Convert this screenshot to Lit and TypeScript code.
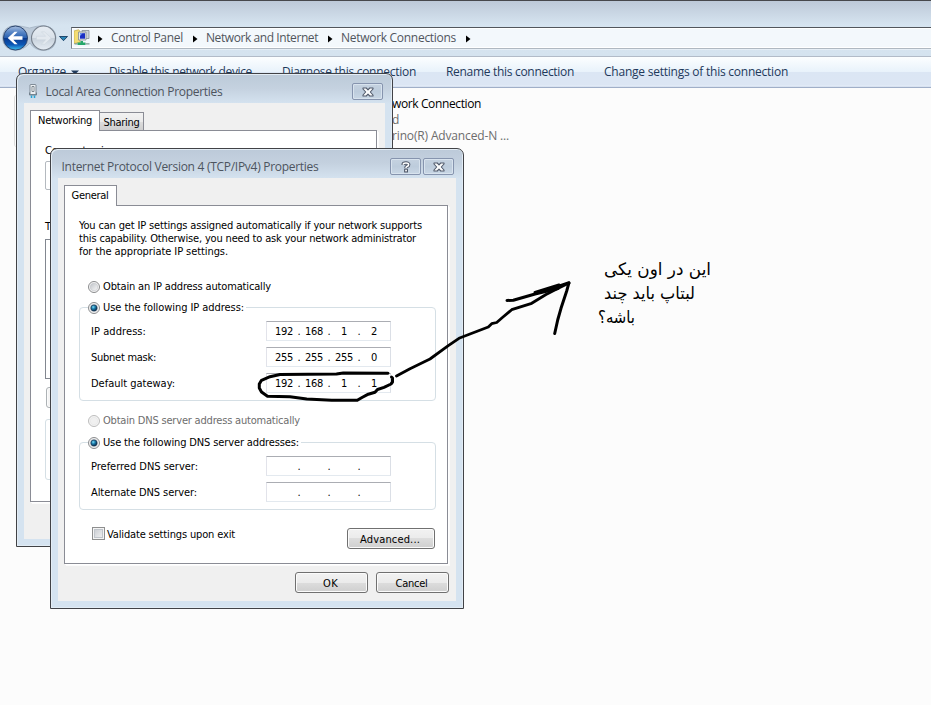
import { LitElement, html, css, svg } from "lit";
import { customElement, property } from "lit/decorators.js";

/** A single line of text, spaced out or tightened to a given width. */
@customElement("fit-text")
class FitText extends LitElement {
  static styles = css`
    :host { display: inline-block; white-space: pre; flex: none; }
    span { display: inline-block; transform-origin: 0 50%; }
  `;
  @property({ type: Number }) w = 0;
  @property() text = "";
  @property({ type: Boolean }) joined = false;

  render() {
    return html`<span dir="auto">${this.text}</span>`;
  }

  async updated() {
    await document.fonts.ready;
    const span = this.renderRoot.querySelector("span") as HTMLElement;
    span.style.letterSpacing = "";
    span.style.transform = "";
    const natural = span.getBoundingClientRect().width;
    if (!this.w || !natural) return;
    this.style.width = `${this.w}px`;
    if (this.joined) span.style.transform = `scaleX(${this.w / natural})`;
    else span.style.letterSpacing = `${(this.w - natural) / this.text.length}px`;
  }
}

const t = (text: string, w: number) => html`<fit-text .text=${text} .w=${w}></fit-text>`;

const closeGlyph = html`<svg width="12" height="10" viewBox="0 0 12 10">
  <path d="M1 1H4.300L6 2.800L7.700 1H11V2L8.300 5L11 8V9H7.700L6 7.200L4.300 9H1V8L3.700 5L1 2Z" fill="#fbfcfd" stroke="#50596a" stroke-width="1.1" stroke-linejoin="round"/>
</svg>`;
const helpGlyph = html`<svg width="10" height="12" viewBox="0 0 10 12">
  <path d="M2.300 4V3.300Q2.300 2 5 2T7.600 3.700Q7.600 4.800 6 5.400Q5 5.900 5 7.200" fill="none" stroke="#50596a" stroke-width="3.600"/>
  <rect x="3.100" y="7.700" width="3.900" height="3.800" rx=".6" fill="#50596a"/>
  <path d="M2.300 3.800V3.300Q2.300 2 5 2T7.600 3.700Q7.600 4.800 6 5.400Q5 5.900 5 7" fill="none" stroke="#fff" stroke-width="1.600"/>
  <rect x="4.200" y="8.700" width="1.700" height="1.700" fill="#fff"/>
</svg>`;
const plugIcon = html`<svg width="10" height="18" viewBox="0 0 10 18">
  <path d="M2 2Q2 1.500 3 1.500H7Q8 1.500 8 2V11.500H2Z" fill="#edf0f3" stroke="#7f8b96"/>
  <path d="M4 3.500H6V8.500H4Z" fill="#fff" stroke="#626e79" stroke-width=".8"/>
  <path d="M1.500 9.500V12H8.500V9.500" fill="none" stroke="#71808d"/>
  <path d="M3.500 12.500V15M6.500 12.500V15" stroke="#25a3d4" stroke-width="1.500"/>
</svg>`;
const crumbArrow = html`<svg class="crumb-arrow" width="5" height="8" viewBox="0 0 5 8"><path d="M0 0.500L4.500 4L0 7.500Z" fill="#000"/></svg>`;

const navButtons = html`<svg width="72" height="28" viewBox="0 0 72 28">
  <defs>
    <linearGradient id="nb" x1="0" y1="0" x2="0" y2="1">
      <stop offset="0" stop-color="#a9bfdf"/><stop offset=".25" stop-color="#5a87c6"/><stop offset=".48" stop-color="#2b62b2"/>
      <stop offset=".52" stop-color="#0a3b90"/><stop offset=".78" stop-color="#0b57b6"/><stop offset="1" stop-color="#3fc1ef"/>
    </linearGradient>
    <linearGradient id="nf" x1="0" y1="0" x2="0" y2="1">
      <stop offset="0" stop-color="#e7edf3"/><stop offset=".5" stop-color="#dae2ea"/><stop offset=".52" stop-color="#c8d2dc"/><stop offset="1" stop-color="#e6edf4"/>
    </linearGradient>
  </defs>
  <path d="M15 1.500Q22 2 29.500 4Q36 2 43.500 1.500Q56 3 56 14Q56 26 43.500 26.500Q34 26 30 19Q24 26 15 26.500Q3 25 2.500 14Q3 2 15 1.500Z" fill="#bccad9" stroke="#a3b2c3" stroke-width=".8"/>
  <circle cx="15.500" cy="14" r="12" fill="url(#nb)" stroke="#2b456f" stroke-width="1"/>
  <path d="M7.800 14L14.500 7.800H17.600L13.300 12.300H22.500V15.700H13.300L17.600 20.200H14.500Z" fill="#fff"/>
  <circle cx="43.500" cy="14" r="12" fill="url(#nf)" stroke="#77818d" stroke-width="1.100"/>
  <path d="M51.200 14L44.500 7.800H41.400L45.700 12.300H36.500V15.700H45.700L41.400 20.200H44.500Z" fill="#e3e9ef" stroke="#cbd4dd" stroke-width=".5"/>
  <path d="M59.500 12.500H67.500L63.500 16.700Z" fill="#2a86b8" stroke="#163c61" stroke-width=".9"/>
</svg>`;

const placeIcon = html`<svg width="18" height="18" viewBox="0 0 18 18">
  <path d="M0 2L4.500 .8L6 2.200V13.500L0 14.500Z" fill="#f3dd75" stroke="#c6a93c" stroke-width=".7"/>
  <path d="M8 1.500H15V9.500H8Z" fill="#cfd5d9" stroke="#848d95" stroke-width=".8"/>
  <path d="M4.500 3H12V11H4.500Z" fill="#e4e8ea" stroke="#828b92" stroke-width=".8"/>
  <path d="M6 4.200H11V9.700H6Z" fill="#1a2fc4"/><path d="M6 4.200H8.500L6 7Z" fill="#7aa2f0"/>
  <path d="M6.500 12H9V13.500H11.500V16H3.500V13.500H6.500Z" fill="#26a86b"/>
  <path d="M.5 14.800H3.500M11.500 14.800H15.500" stroke="#7d9a92" stroke-width="1.200"/>
</svg>`;

const commonStyles = css`
  * { box-sizing: border-box; }
  svg { display: block; flex: none; }
`;

@customElement("aero-dialog")
class AeroDialog extends LitElement {
  static styles = [commonStyles, css`
    :host {
      display: flex; flex-direction: column; box-sizing: border-box;
      border: 1px solid #414246; border-radius: 7px 7px 0 0;
      background: linear-gradient(#bccad9, #c4d1df 14px, #d5e3f0 30px);
      box-shadow: inset 1px 1px 0 #e4edf5, inset -1px -1px 0 #e2ecf5;
      padding: 0 7px 7px;
    }
    .title {
      display: flex; align-items: center; height: 29px; flex: none; padding: 5px 0 0 3.500px;
      color: #4d545e; font: 12px/16px "Open Sans", sans-serif;
    }
    .title fit-text { margin-top: 2px; }
    .icon { margin: 1px 8px 0 0; }
    .spacer { flex: 1; }
    .cap {
      display: flex; align-items: center; justify-content: center;
      width: 31px; height: 17px; margin: 1px 2px 0 0; border: 1px solid #8694ae; border-radius: 2px;
      background: linear-gradient(#c5d2e0, #bdccdc 50%, #c9d7e5); box-shadow: inset 0 0 0 1px #d8e3ee;
    }
    .body { flex: 1; min-height: 0; background: #f0f0f0; }
  `];
  @property() heading = "";
  @property({ type: Number }) headingWidth = 0;
  @property({ type: Boolean }) help = false;
  @property({ type: Boolean }) plug = false;

  render() {
    return html`
      <div class="title">
        ${this.plug ? html`<span class="icon">${plugIcon}</span>` : ""}
        ${t(this.heading, this.headingWidth)}
        <span class="spacer"></span>
        ${this.help ? html`<span class="cap">${helpGlyph}</span>` : ""}
        <span class="cap">${closeGlyph}</span>
      </div>
      <div class="body"><slot></slot></div>`;
  }
}

@customElement("ip-field")
class IpField extends LitElement {
  static styles = css`
    :host {
      display: flex; box-sizing: border-box; width: 125px; height: 20px; padding-left: 4.500px; background: #fff;
      border: 1px solid; border-color: #abadb3 #dbdfe6 #e3e9ef #e2e3ea; line-height: 19px;
    }
    .octet { width: 25px; text-align: center; }
    .dot { width: 5px; text-align: center; }
  `;
  @property({ type: Array }) octets: string[] = [];
  render() {
    return this.octets.map((o, i) => html`${i ? html`<span class="dot">.</span>` : ""}<span class="octet">${o ? t(o, o.length * 6) : ""}</span>`);
  }
}

@customElement("app-root")
class AppRoot extends LitElement {
  static styles = [commonStyles, css`
    :host {
      display: block; position: relative; width: 931px; height: 705px; overflow: hidden;
      background: #fcfcfc; color: #000; font: 11px/13px "DejaVu Sans Condensed", "DejaVu Sans", sans-serif;
    }
    .explorer { font: 12px/16px "Open Sans", sans-serif; }
    .chrome {
      height: 57px; padding-top: 23px; display: flex; align-items: flex-start;
      border-top: 1px solid #47484c; border-bottom: 1px solid #b2bbc8;
      background: linear-gradient(#bdc9d8, #d6e4f0 24px, #d5e3ef);
    }
    .nav { width: 71px; height: 28px; overflow: visible; }
    .address {
      flex: 1; height: 22px; margin-top: 3px; display: flex; align-items: center; padding-left: 2px;
      border: 1px solid #52565c; border-right: 0; border-bottom-color: #afb8c1; border-left-color: #7b838d;
      background: #f3f8fc; box-shadow: inset 0 -1px 0 #fff, inset 1px 1px 0 #fff, 0 1px 0 #e5eef6; color: #50555c;
    }
    .crumb-arrow { margin: 1px 8px 0 10px; }
    .address > svg:nth-of-type(2) { margin-left: 6px; }
    .toolbar {
      height: 31px; display: flex; align-items: center; padding-left: 18px; gap: 30px;
      border-bottom: 1px solid #a0afc8; color: #1e395b;
      background: linear-gradient(#fcfeff, #e8f2fb 15px, #dbe6f4 15px, #dce6f4 28px, #e6eef9 29px, #cbd7e9);
    }
    .organize { display: flex; align-items: center; gap: 5px; width: 61px; }
    .tile {
      position: absolute; left: 14px; top: 95px; width: 520px; height: 52px; padding: 1px 0 0 377px;
      border-left: 1px solid #dcdcdc; border-radius: 3px; color: #6d6d6d; font: 12px/16px "Open Sans", sans-serif;
    }
    .tile div { height: 16px; }
    .tile .name { color: #000; }

    .dialog { position: absolute; }
    .lan { left: 16px; top: 73px; width: 377px; height: 474px; }
    .ipv4 { left: 50px; top: 148px; width: 414px; height: 461px; }

    .tabs { display: flex; align-items: flex-end; margin-left: 6px; position: relative; z-index: 1; }
    .tab {
      display: flex; justify-content: center; border: 1px solid #8a8c95; border-bottom: 0;
      background: linear-gradient(#f2f2f2, #ebebeb 50%, #dddddd 50%, #cfcfcf);
    }
    .tab.on { background: #fff; margin-bottom: -1px; }
    .lan .tabs { padding-top: 7px; }
    .lan .tab.on { width: 70px; height: 21px; padding-top: 3px; }
    .lan .tab.off { width: 45px; height: 18px; padding-top: 3px; margin-left: -1px; }
    .ipv4 .tabs { padding-top: 7px; }
    .ipv4 .tab { width: 53px; height: 21px; padding: 3px 1px 0 0; }
    .page { margin-left: 6px; border: 1px solid #8a8c95; background: #fff; box-shadow: 1px 1px 0 #fff, 2px 2px 0 #fbfbfb; }
    .lan .page { width: 347px; height: 372px; padding: 13px 14px 0; }
    .ipv4 .page { width: 384px; height: 359px; padding: 13px 11px 0 14px; }

    .adapter { height: 29px; margin: 4px 0 30px; border: 1px solid #b4b9bf; border-radius: 2px; }
    .list { height: 140px; margin-top: 6px; border: 1px solid #828790; }
    .btn {
      display: flex; align-items: center; justify-content: center; height: 21px;
      border: 1px solid #707070; border-radius: 3px; box-shadow: inset 0 0 0 1px #fbfbfb;
      background: linear-gradient(#f2f2f2, #ebebeb 50%, #dddddd 50%, #cfcfcf);
    }
    .install { width: 90px; margin: 8px 0 0 1px; border-color: #adb2b5; background: #f4f4f4; }
    .desc { height: 61px; margin-top: 11px; border: 1px solid #d5dfe5; border-radius: 3px; }

    .intro { display: flex; flex-direction: column; height: 39px; }
    .radio { display: flex; align-items: center; height: 17px; padding-left: 9px; }
    .radio fit-text { margin: 0 0 0 3px; }
    .radio.first { margin-top: 20px; }
    .radio.dim { margin-top: 11px; color: #6d6d6d; }
    fieldset {
      display: flow-root; width: 357px; margin: 0; padding: 0 0 0 11px; min-width: 0;
      border: 1px solid #d5dfe5; border-radius: 4px;
    }
    legend { margin-left: -3px; padding: 0 2px 0 0; }
    legend .radio { padding-left: 0; }
    .ip { height: 102px; margin-top: 4px; }
    .dns { height: 76px; margin-top: 5px; }
    .fields { display: flex; flex-direction: column; gap: 6px; padding-top: 5px; }
    .field { display: flex; align-items: center; height: 20px; }
    .field .label { width: 175px; }
    .last { display: flex; justify-content: space-between; margin-top: 18px; }
    .check { display: flex; gap: 2px; padding-left: 13px; }
    .box {
      width: 13px; height: 13px; margin-top: -1px; border: 1px solid #8e8f8f;
      background: linear-gradient(135deg, #c3c7cd, #f6f6f6); box-shadow: inset 0 0 0 1px #f4f4f4, inset 0 0 0 2px #c0c5cb;
    }
    .advanced { width: 88px; margin-right: 1px; padding: 2px 2px 0 0; }
    .actions { display: flex; justify-content: flex-end; gap: 8px; padding: 8px 7px 0 0; }
    .actions .btn { width: 73px; padding: 2px 2px 0 0; }

    .ink { position: absolute; left: 0; top: 0; pointer-events: none; }
    .note {
      position: absolute; left: 598px; top: 257px; display: flex; flex-direction: column;
      font: 17px/24px "DejaVu Sans", sans-serif;
    }
    .note .in { padding-left: 6px; }
  `];

  private radio(text: string, w: number, state: "on" | "off" | "dim") {
    const dim = state === "dim";
    return html`
      <svg width="12" height="12" viewBox="0 0 12 12">
        <defs>
          <linearGradient id="r" x1="0" y1="0" x2="1" y2="1"><stop offset="0" stop-color="#bfc3c8"/><stop offset="1" stop-color="#fafafa"/></linearGradient>
          <radialGradient id="d" cx=".38" cy=".35" r=".65"><stop offset="0" stop-color="#7fdcf6"/><stop offset=".45" stop-color="#1c7fae"/><stop offset="1" stop-color="#0a2a4a"/></radialGradient>
        </defs>
        <circle cx="6" cy="6" r="5.500" fill="#f6f6f6" stroke=${dim ? "#bcbcbc" : "#8b8c8e"}></circle>
        <circle cx="6" cy="6" r="3.800" fill=${dim ? "#f0f0f0" : "url(#r)"} stroke=${dim ? "#e4e4e4" : "#c2c5c9"} stroke-width=".6"></circle>
        ${state === "on" ? svg`<circle cx="6" cy="6" r="3.100" fill="url(#d)" stroke="#173a58" stroke-width=".7"></circle>` : ""}
      </svg>
      ${t(text, w)}`;
  }

  private field(label: string, w: number, octets: string[]) {
    return html`<div class="field"><span class="label">${t(label, w)}</span><ip-field .octets=${octets}></ip-field></div>`;
  }

  render() {
    const blank = ["", "", "", ""];
    return html`
      <div class="explorer">
        <div class="chrome">
          <div class="nav">${navButtons}</div>
          <div class="address">
            ${placeIcon}${crumbArrow}${t("Control Panel", 72)}
            ${crumbArrow}${t("Network and Internet", 112)}
            ${crumbArrow}${t("Network Connections", 115)}${crumbArrow}
          </div>
        </div>
        <div class="toolbar">
          <span class="organize">${t("Organize", 48)}<svg width="8" height="5" viewBox="0 0 8 5"><path d="M0 .5H8L4 4.500Z" fill="#1e395b"/></svg></span>
          ${t("Disable this network device", 143)}
          ${t("Diagnose this connection", 134)}
          ${t("Rename this connection", 128)}
          ${t("Change settings of this connection", 184)}
        </div>
        <div class="tile">
          <div class="name">${t("work Connection", 89)}</div>
          <div>${t("d", 7)}</div>
          <div>${t("rino(R) Advanced-N ...", 117)}</div>
        </div>
      </div>

      <aero-dialog class="dialog lan" plug .heading=${"Local Area Connection Properties"} .headingWidth=${177}>
        <div class="tabs">
          <div class="tab on">${t("Networking", 54)}</div>
          <div class="tab off">${t("Sharing", 36)}</div>
        </div>
        <div class="page">
          <div>${t("Connect using:", 75)}</div>
          <div class="adapter"></div>
          <div>${t("T", 7)}</div>
          <div class="list"></div>
          <div class="btn install"></div>
          <div class="desc"></div>
        </div>
      </aero-dialog>

      <aero-dialog class="dialog ipv4" help .heading=${"Internet Protocol Version 4 (TCP/IPv4) Properties"} .headingWidth=${257}>
        <div class="tabs"><div class="tab on">${t("General", 37)}</div></div>
        <div class="page">
          <div class="intro">
            ${t("You can get IP settings assigned automatically if your network supports", 343)}
            ${t("this capability. Otherwise, you need to ask your network administrator", 337)}
            ${t("for the appropriate IP settings.", 149)}
          </div>
          <div class="radio first">${this.radio("Obtain an IP address automatically", 168, "off")}</div>
          <fieldset class="ip">
            <legend><div class="radio">${this.radio("Use the following IP address:", 141, "on")}</div></legend>
            <div class="fields">
              ${this.field("IP address:", 55, ["192", "168", "1", "2"])}
              ${this.field("Subnet mask:", 65, ["255", "255", "255", "0"])}
              ${this.field("Default gateway:", 84, ["192", "168", "1", "1"])}
            </div>
          </fieldset>
          <div class="radio dim">${this.radio("Obtain DNS server address automatically", 197, "dim")}</div>
          <fieldset class="dns">
            <legend><div class="radio">${this.radio("Use the following DNS server addresses:", 196, "on")}</div></legend>
            <div class="fields">
              ${this.field("Preferred DNS server:", 107, blank)}
              ${this.field("Alternate DNS server:", 106, blank)}
            </div>
          </fieldset>
          <div class="last">
            <div class="check"><span class="box"></span>${t("Validate settings upon exit", 128)}</div>
            <div class="btn advanced">${t("Advanced...", 60)}</div>
          </div>
        </div>
        <div class="actions">
          <div class="btn">${t("OK", 15)}</div>
          <div class="btn">${t("Cancel", 32)}</div>
        </div>
      </aero-dialog>

      <svg class="ink" width="931" height="705" viewBox="0 0 931 705" fill="none" stroke="#000" stroke-linecap="round" stroke-linejoin="round">
        <path stroke-width="3" d="M388 373.300L343.300 372.900L336.500 374L280 374.500L270 376.700L261.500 380.300L259.300 384V388L261.500 392L267.500 396.300L290 396.700L306.700 399L331.700 400.300H357.300L362 397.500L368.300 394.200L375 392.300L377.500 389.500L384 387.300L391 384L392.500 382V378L391.500 377"/>
        <path stroke-width="2.800" d="M396.500 376L410 368.700L430 359L448.300 345.700L459 338.300L470 334L488.300 327L491.700 323.700L496.700 322.500L503 317L511.700 309.700L531.700 303.300L546 294.500L556.700 289L569 283"/>
        <path stroke-width="3" d="M507 300.500L513.300 300.200L535 294L558 286.500L569 282.700L566.700 291L561 308.300L557.700 320L554.700 333.500M535 292.500L559 285M535 294L558 288.500"/>
      </svg>

      <div class="note">
        <fit-text class="in" joined .text=${"این در اون یکی"} .w=${107}></fit-text>
        <fit-text class="in" joined .text=${"لبتاپ باید چند"} .w=${91}></fit-text>
        <fit-text joined .text=${"باشه؟"} .w=${37}></fit-text>
      </div>`;
  }
}
